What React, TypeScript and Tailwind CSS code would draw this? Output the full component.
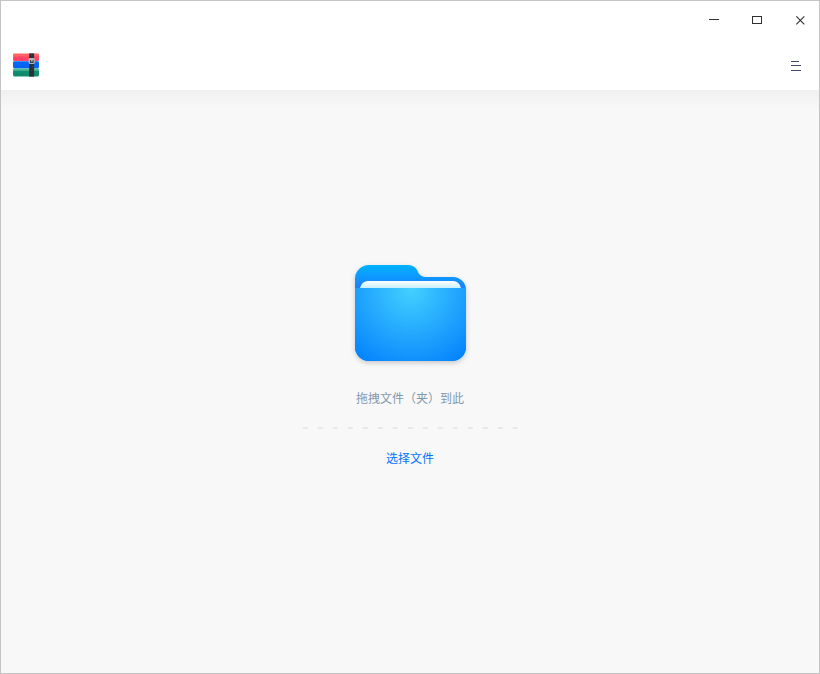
import React from "react";

const iconButton = "flex h-[38px] w-[43px] items-center justify-center";

function Logo() {
  return (
    <svg width="28" height="26" viewBox="0 0 28 26" aria-hidden="true">
      <defs>
        <linearGradient id="strap" x1="0" y1="0" x2="1" y2="0">
          <stop offset="0" stopColor="#242a31" />
          <stop offset="1" stopColor="#2d333b" />
        </linearGradient>
      </defs>
      <rect x="1" y="1.6" width="26" height="4" rx="1.2" fill="#ff6566" />
      <rect x="1" y="4.4" width="26" height="4.6" rx="1.2" fill="#ff4668" />
      <path d="M3 6h2v2H3zM7 4h1v4H7zM9 6h2v2H9z" fill="#df3563" opacity="0.55" />
      <rect x="1" y="9" width="26" height="3" rx="1.2" fill="#3392fb" />
      <rect x="1" y="10" width="26" height="6.4" rx="1.4" fill="#0865f4" />
      <path d="M4 13h2v2H4zM9 14h4v1H9z" fill="#0555da" opacity="0.5" />
      <rect x="1" y="16.4" width="26" height="4" rx="1.2" fill="#4cb894" />
      <rect x="1" y="18.8" width="26" height="5.6" rx="1.4" fill="#128c70" />
      <path d="M4 21h2v2H4zM8 22h5v1H8z" fill="#087c63" opacity="0.6" />
      <rect x="17.2" y="1.4" width="4.9" height="23.2" fill="url(#strap)" />
      <path d="M19 3h1v1h-1zM20 14h1v1h-1zM19 18h1v1h-1z" fill="#59616a" opacity="0.5" />
      <rect x="16.6" y="6" width="6.2" height="6" rx="1.4" fill="#b4b7ba" />
      <path d="M18 8h1v3h-1zM20.6 8h1v3h-1zM19 9.6h1.6v1.4H19z" fill="#3b4046" />
    </svg>
  );
}

function Folder() {
  return (
    <svg width="131" height="120" viewBox="-10 -10 131 120" aria-hidden="true">
      <defs>
        <linearGradient id="back" x1="0" y1="0" x2="0" y2="24" gradientUnits="userSpaceOnUse">
          <stop offset="0" stopColor="#00b2ff" />
          <stop offset="1" stopColor="#1c7dff" />
        </linearGradient>
        <linearGradient id="paper" x1="0" y1="16" x2="0" y2="23" gradientUnits="userSpaceOnUse">
          <stop offset="0" stopColor="#ffffff" />
          <stop offset="1" stopColor="#c6f0ff" />
        </linearGradient>
        <radialGradient id="front" cx="55.5" cy="25" r="92" gradientUnits="userSpaceOnUse">
          <stop offset="0" stopColor="#43d0ff" />
          <stop offset="1" stopColor="#007dfc" />
        </radialGradient>
        <filter id="shade" x="-15%" y="-15%" width="130%" height="135%">
          <feDropShadow dx="0" dy="2" stdDeviation="2.5" floodColor="#000000" floodOpacity="0.2" />
        </filter>
      </defs>
      <g filter="url(#shade)">
        <path d="M0 14A14 14 0 0 1 14 0H52C57 0 60 1.5 62 5L63.5 8Q65.8 12 71 12H98A13 13 0 0 1 111 25V82A14 14 0 0 1 97 96H14A14 14 0 0 1 0 82Z" fill="url(#back)" />
      </g>
      <path d="M5 23Q7 16 13 16H98Q104 16 106 23Z" fill="url(#paper)" />
      <path d="M0 23H111V82A14 14 0 0 1 97 96H14A14 14 0 0 1 0 82Z" fill="url(#front)" />
    </svg>
  );
}

export default function App() {
  return (
    <div className="flex h-[674px] w-[820px] flex-col border border-[#c4c4c4] bg-[#f8f8f8] font-['Noto_Sans_CJK_SC',sans-serif] text-xs">
      <header className="h-[89px] shrink-0 bg-white">
        <div className="flex h-[38px] justify-end">
          <div className="-mr-[2px] flex">
            <button aria-label="最小化" className={iconButton}>
              <span className="mb-px h-px w-[10px] bg-[#303030]" />
            </button>
            <button aria-label="最大化" className={iconButton}>
              <span className="h-2 w-[10px] border border-[#303030]" />
            </button>
            <button aria-label="关闭" className={iconButton}>
              <svg width="10" height="10" viewBox="0 0 10 10" stroke="#303030" strokeWidth="1.1">
                <path d="M1.3 1.3l8 8M9.3 1.3l-8 8" />
              </svg>
            </button>
          </div>
        </div>
        <div className="flex h-[51px] items-center justify-between pr-[18px] pl-[11px]">
          <Logo />
          <button aria-label="菜单" className="mt-[3px] flex w-[10px] flex-col">
            <span className="h-px w-2 bg-[#414d68]" />
            <span className="mt-[3px] h-px w-[10px] bg-[#414d68]" />
            <span className="mt-1 h-px w-[10px] bg-[#414d68]" />
          </button>
        </div>
      </header>
      <main className="flex flex-1 flex-col items-center bg-[linear-gradient(to_bottom,#f0f0f0_0px,#f8f8f8_20px)] pt-[165px]">
        <Folder />
        <p className="mt-[14px] leading-[18px] text-[#8199ad]">拖拽文件（夹）到此</p>
        <svg className="mt-5" width="216" height="2" viewBox="0 0 216 2" aria-hidden="true">
          <path d="M0.8 1H216" stroke="#e9e9e9" strokeWidth="2" strokeDasharray="5 10" />
        </svg>
        <button className="mt-5 leading-[18px] text-[#0074ff]">选择文件</button>
      </main>
    </div>
  );
}
